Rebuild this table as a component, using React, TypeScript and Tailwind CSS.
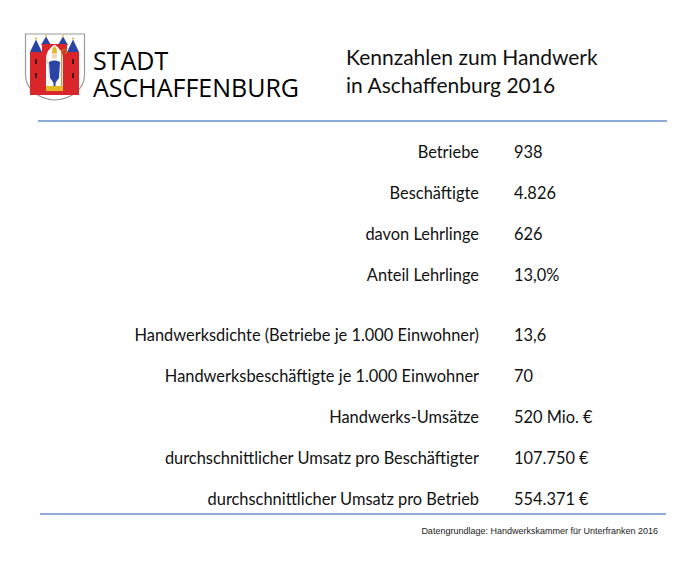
const rowsA = [
  ["Betriebe", "938"],
  ["Beschäftigte", "4.826"],
  ["davon Lehrlinge", "626"],
  ["Anteil Lehrlinge", "13,0%"],
];

const rowsB = [
  ["Handwerksdichte (Betriebe je 1.000 Einwohner)", "13,6"],
  ["Handwerksbeschäftigte je 1.000 Einwohner", "70"],
  ["Handwerks-Umsätze", "520 Mio. €"],
  ["durchschnittlicher Umsatz pro Beschäftigter", "107.750 €"],
  ["durchschnittlicher Umsatz pro Betrieb", "554.371 €"],
];

const red = "#d9262b";
const blue = "#2a44a6";
const gold = "#e2b824";

function Crest() {
  return (
    <svg width="62" height="70" viewBox="0 0 62 70">
      <path d="M1.5 2 H60.5 V43 C60.5 57 47 67.5 31 68 C15 67.5 1.5 57 1.5 43 Z" fill="#fff" stroke="#9a9a9a" strokeWidth="1.2" />
      {/* outer towers */}
      <path d="M6 20 L12 7.5 L18 20 Z" fill={blue} />
      <path d="M43 20 L49 7.5 L55 20 Z" fill={blue} />
      <circle cx="12" cy="6.5" r="1.1" fill={gold} />
      <circle cx="49" cy="6.5" r="1.1" fill={gold} />
      <rect x="6" y="20" width="12" height="43" fill={red} />
      <rect x="43" y="20" width="12" height="43" fill={red} />
      <rect x="11" y="27" width="2" height="5" fill="#4a1414" />
      <rect x="11" y="41" width="2" height="5" fill="#4a1414" />
      <rect x="48" y="27" width="2" height="5" fill="#4a1414" />
      <rect x="48" y="41" width="2" height="5" fill="#4a1414" />
      {/* inner turrets */}
      <path d="M17 13 L22 4.5 L27 13 Z" fill={blue} />
      <path d="M34 13 L39 4.5 L44 13 Z" fill={blue} />
      <circle cx="22" cy="3.8" r="0.9" fill={gold} />
      <circle cx="39" cy="3.8" r="0.9" fill={gold} />
      {/* gate */}
      <rect x="18" y="12" width="25" height="51" fill={red} />
      <path d="M22 59 V27 Q22 18 30.5 12.5 Q39 18 39 27 V59 Z" fill="#fff" />
      {/* bishop */}
      <path d="M28 21.5 L28.5 16.5 L30.5 14 L32.5 16.5 L33 21.5 Z" fill={gold} />
      <circle cx="30.5" cy="24" r="2.6" fill="#f4d6b8" />
      <path d="M24.5 30 Q30.5 26.5 36.5 30 L37 55 H24 Z" fill="#fff" stroke="#c9c9d6" strokeWidth="0.5" />
      <path d="M25 30 Q30.5 27 36 30 L35 46 L30.5 52 L26 46 Z" fill={blue} />
      <rect x="29.5" y="32" width="2" height="23" fill={blue} />
      <path d="M24.5 33 L22.5 27" stroke="#f4d6b8" strokeWidth="1.6" />
      <rect x="37.2" y="20" width="1.1" height="35" fill="#b58e1c" />
      <path d="M37.7 20.5 q0 -3 3 -3 q2.2 0 2 2.2 q-0.3 1.6 -2 1.4" fill="none" stroke="#b58e1c" strokeWidth="1.2" />
      <path d="M22 54 H39 V59 H22 Z" fill={gold} />
      <path d="M18 59 H43 V63 H18 Z" fill={red} />
    </svg>
  );
}

function Row({ label, value, className = "" }: { label: string; value: string; className?: string }) {
  return (
    <div className={`flex h-[20px] items-center ${className}`}>
      <div className="w-[479px] text-right">{label}</div>
      <div className="ml-[35px]">{value}</div>
    </div>
  );
}

export default function App() {
  return (
    <div className="w-[690px] h-[569px] bg-white text-[#111] overflow-hidden" style={{ fontFamily: "Lato, 'Open Sans', sans-serif" }}>
      <div className="flex pt-[32px] pl-[24px]">
        <Crest />
        <div className="ml-[7px] mt-[15px] text-[25px] leading-[27px] font-medium text-black" style={{ fontFamily: "'Open Sans', sans-serif" }}>
          <div>STADT</div>
          <div>ASCHAFFENBURG</div>
        </div>
        <div className="ml-[47px] mt-[11px] text-[21px] leading-[28px]">
          <div>Kennzahlen zum Handwerk</div>
          <div>in Aschaffenburg 2016</div>
        </div>
      </div>
      <div className="ml-[38px] mt-[18px] w-[629px] h-[2px] bg-[#8eaadb]" />
      <div className="mt-[20px] flex flex-col gap-[21px] text-[16.4px]">
        {rowsA.map(([l, v]) => (
          <Row key={l} label={l} value={v} />
        ))}
        {rowsB.map(([l, v], i) => (
          <Row key={l} label={l} value={v} className={i === 0 ? "mt-[19px]" : ""} />
        ))}
      </div>
      <div className="ml-[40px] mt-[4px] w-[626px] h-[2px] bg-[#8eaadb]" />
      <div className="mt-[11px] pr-[32px] text-right text-[9px] leading-[10px] text-[#222]" style={{ fontFamily: "'Liberation Sans', Arial, sans-serif" }}>
        Datengrundlage: Handwerkskammer für Unterfranken 2016
      </div>
    </div>
  );
}
